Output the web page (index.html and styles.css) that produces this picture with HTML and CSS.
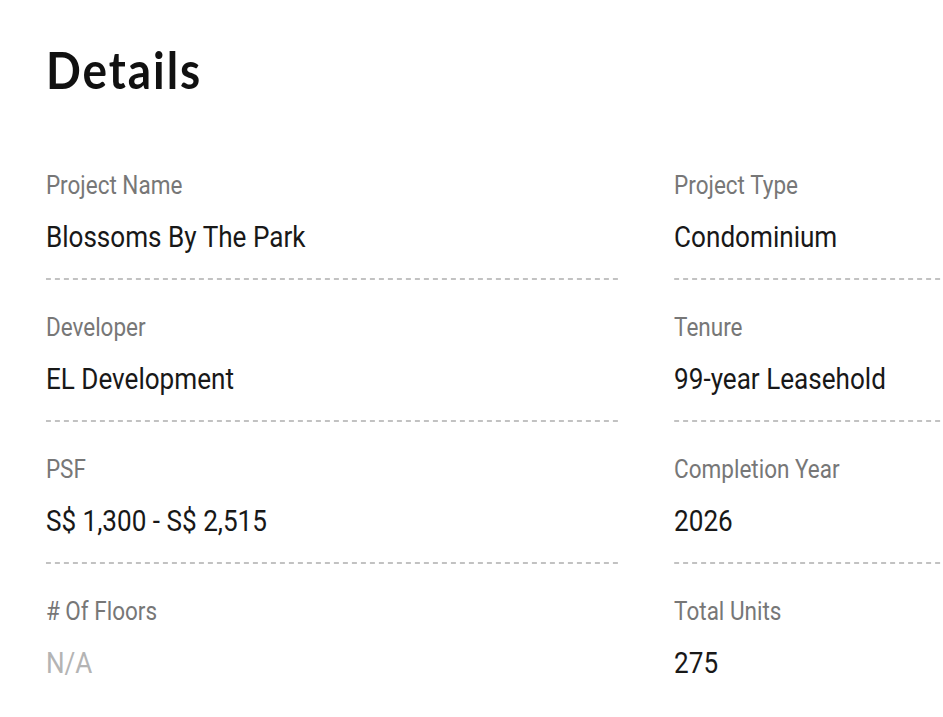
FILE: index.html
```html
<!DOCTYPE html>
<html lang="en">
<head>
<meta charset="utf-8">
<title>Details</title>
<link rel="stylesheet" href="styles.css">
</head>
<body>
<main class="page">
  <h1 class="title">Details</h1>
  <section class="grid">
    <div class="item"><div class="label">Project Name</div><div class="value">Blossoms By The Park</div></div>
    <div class="item"><div class="label">Project Type</div><div class="value">Condominium</div></div>
    <div class="item"><div class="label">Developer</div><div class="value">EL Development</div></div>
    <div class="item"><div class="label">Tenure</div><div class="value">99-year Leasehold</div></div>
    <div class="item"><div class="label">PSF</div><div class="value">S$ 1,300 - S$ 2,515</div></div>
    <div class="item"><div class="label">Completion Year</div><div class="value">2026</div></div>
    <div class="item"><div class="label"># Of Floors</div><div class="value value-empty">N/A</div></div>
    <div class="item"><div class="label">Total Units</div><div class="value">275</div></div>
  </section>
</main>
</body>
</html>
```
FILE: styles.css
```css
html, body {
  margin: 0;
  padding: 0;
  overflow: hidden;
  background: #ffffff;
}

.page {
  width: 1500px;
  padding-left: 51px;
  transform: scaleX(0.9);
  transform-origin: 0 0;
  font-family: Roboto, "Liberation Sans", sans-serif;
}

.title {
  margin: 39px 0 0 0;
  font-family: Lato, "Open Sans", sans-serif;
  font-weight: 700;
  font-size: 51px;
  line-height: 61px;
  color: #111111;
  letter-spacing: 2.2px;
}

.grid {
  display: grid;
  grid-template-columns: 636px 636px;
  column-gap: 62px;
  margin-top: 71px;
}

.item {
  padding-bottom: 23px;
  margin-bottom: 33px;
  background-image: linear-gradient(to right, #c2c2c2 0 6px, transparent 6px 10px);
  background-size: 10px 2px;
  background-repeat: repeat-x;
  background-position: 0 100%;
  border-bottom: 2px solid transparent;
  background-origin: border-box;
  background-clip: border-box;
}

.item:nth-last-child(-n+2) {
  background-image: none;
}

.label {
  font-size: 25px;
  line-height: 30px;
  color: #777777;
}

.value {
  margin-top: 18px;
  font-size: 29px;
  line-height: 36px;
  color: #181818;
}

.value-empty {
  color: #b4b4b4;
}
```
